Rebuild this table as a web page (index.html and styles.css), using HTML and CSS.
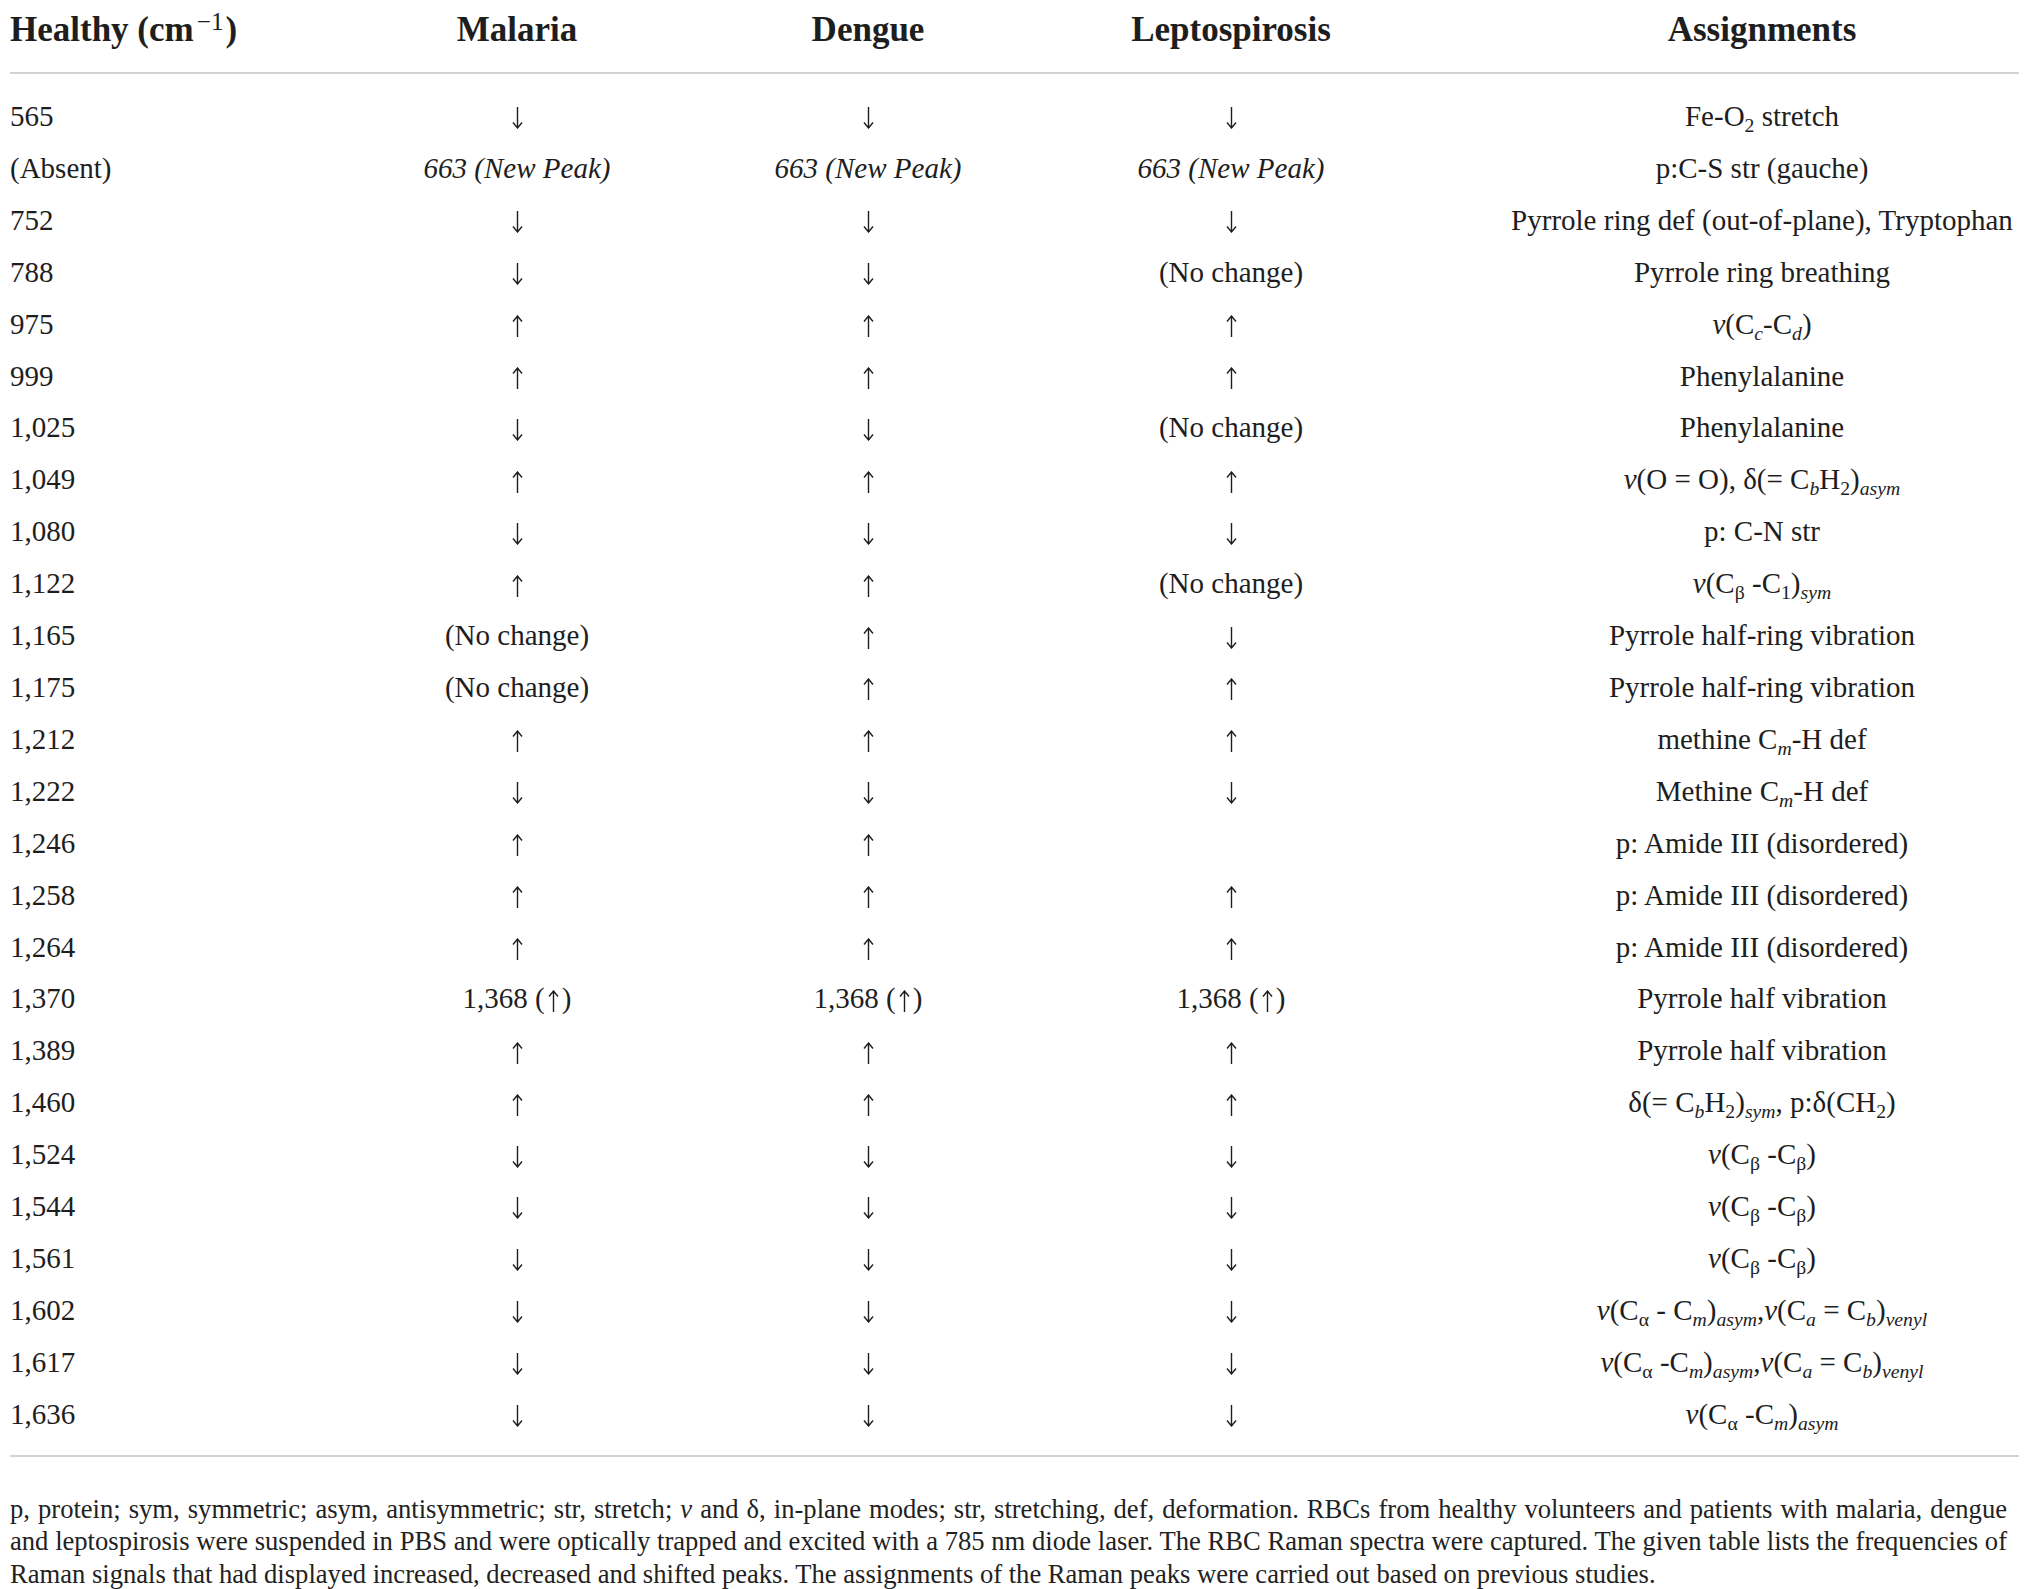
FILE: index.html
```html
<!DOCTYPE html>
<html lang="en">
<head>
<meta charset="utf-8">
<title>Raman peaks of RBCs</title>
<link rel="stylesheet" href="styles.css">
</head>
<body>
<svg class="defs" width="0" height="0" aria-hidden="true">
  <defs>
    <symbol id="up" viewBox="0 0 11 22"><path d="M5.5 22V1M1 6.5L5.5 1L10 6.5"/></symbol>
    <symbol id="down" viewBox="0 0 11 22"><path d="M5.5 0V21M1 15.5L5.5 21L10 15.5"/></symbol>
  </defs>
</svg>
<div class="page">
  <div class="table">
    <div class="row head">
      <div class="cell first"><span>Healthy (cm<sup>−1</sup>)</span></div>
      <div class="cell"><span>Malaria</span></div>
      <div class="cell"><span>Dengue</span></div>
      <div class="cell"><span>Leptospirosis</span></div>
      <div class="cell"><span>Assignments</span></div>
    </div>
    <div class="body">
      <div class="row"><div class="cell first">565</div><div class="cell"><svg class="arrow"><use href="#down"/></svg></div><div class="cell"><svg class="arrow"><use href="#down"/></svg></div><div class="cell"><svg class="arrow"><use href="#down"/></svg></div><div class="cell"><span>Fe-O<sub>2</sub> stretch</span></div></div>
      <div class="row"><div class="cell first">(Absent)</div><div class="cell"><span><i>663 (New Peak)</i></span></div><div class="cell"><span><i>663 (New Peak)</i></span></div><div class="cell"><span><i>663 (New Peak)</i></span></div><div class="cell"><span>p:C-S str (gauche)</span></div></div>
      <div class="row"><div class="cell first">752</div><div class="cell"><svg class="arrow"><use href="#down"/></svg></div><div class="cell"><svg class="arrow"><use href="#down"/></svg></div><div class="cell"><svg class="arrow"><use href="#down"/></svg></div><div class="cell"><span>Pyrrole ring def (out-of-plane), Tryptophan</span></div></div>
      <div class="row"><div class="cell first">788</div><div class="cell"><svg class="arrow"><use href="#down"/></svg></div><div class="cell"><svg class="arrow"><use href="#down"/></svg></div><div class="cell"><span>(No change)</span></div><div class="cell"><span>Pyrrole ring breathing</span></div></div>
      <div class="row"><div class="cell first">975</div><div class="cell"><svg class="arrow"><use href="#up"/></svg></div><div class="cell"><svg class="arrow"><use href="#up"/></svg></div><div class="cell"><svg class="arrow"><use href="#up"/></svg></div><div class="cell"><span><i>ν</i>(C<sub><i>c</i></sub>-C<sub><i>d</i></sub>)</span></div></div>
      <div class="row"><div class="cell first">999</div><div class="cell"><svg class="arrow"><use href="#up"/></svg></div><div class="cell"><svg class="arrow"><use href="#up"/></svg></div><div class="cell"><svg class="arrow"><use href="#up"/></svg></div><div class="cell"><span>Phenylalanine</span></div></div>
      <div class="row"><div class="cell first">1,025</div><div class="cell"><svg class="arrow"><use href="#down"/></svg></div><div class="cell"><svg class="arrow"><use href="#down"/></svg></div><div class="cell"><span>(No change)</span></div><div class="cell"><span>Phenylalanine</span></div></div>
      <div class="row"><div class="cell first">1,049</div><div class="cell"><svg class="arrow"><use href="#up"/></svg></div><div class="cell"><svg class="arrow"><use href="#up"/></svg></div><div class="cell"><svg class="arrow"><use href="#up"/></svg></div><div class="cell"><span><i>ν</i>(O = O), δ(= C<sub><i>b</i></sub>H<sub>2</sub>)<sub><i>asym</i></sub></span></div></div>
      <div class="row"><div class="cell first">1,080</div><div class="cell"><svg class="arrow"><use href="#down"/></svg></div><div class="cell"><svg class="arrow"><use href="#down"/></svg></div><div class="cell"><svg class="arrow"><use href="#down"/></svg></div><div class="cell"><span>p: C-N str</span></div></div>
      <div class="row"><div class="cell first">1,122</div><div class="cell"><svg class="arrow"><use href="#up"/></svg></div><div class="cell"><svg class="arrow"><use href="#up"/></svg></div><div class="cell"><span>(No change)</span></div><div class="cell"><span><i>ν</i>(C<sub>β</sub> -C<sub>1</sub>)<sub><i>sym</i></sub></span></div></div>
      <div class="row"><div class="cell first">1,165</div><div class="cell"><span>(No change)</span></div><div class="cell"><svg class="arrow"><use href="#up"/></svg></div><div class="cell"><svg class="arrow"><use href="#down"/></svg></div><div class="cell"><span>Pyrrole half-ring vibration</span></div></div>
      <div class="row"><div class="cell first">1,175</div><div class="cell"><span>(No change)</span></div><div class="cell"><svg class="arrow"><use href="#up"/></svg></div><div class="cell"><svg class="arrow"><use href="#up"/></svg></div><div class="cell"><span>Pyrrole half-ring vibration</span></div></div>
      <div class="row"><div class="cell first">1,212</div><div class="cell"><svg class="arrow"><use href="#up"/></svg></div><div class="cell"><svg class="arrow"><use href="#up"/></svg></div><div class="cell"><svg class="arrow"><use href="#up"/></svg></div><div class="cell"><span>methine C<sub><i>m</i></sub>-H def</span></div></div>
      <div class="row"><div class="cell first">1,222</div><div class="cell"><svg class="arrow"><use href="#down"/></svg></div><div class="cell"><svg class="arrow"><use href="#down"/></svg></div><div class="cell"><svg class="arrow"><use href="#down"/></svg></div><div class="cell"><span>Methine C<sub><i>m</i></sub>-H def</span></div></div>
      <div class="row"><div class="cell first">1,246</div><div class="cell"><svg class="arrow"><use href="#up"/></svg></div><div class="cell"><svg class="arrow"><use href="#up"/></svg></div><div class="cell"><span></span></div><div class="cell"><span>p: Amide III (disordered)</span></div></div>
      <div class="row"><div class="cell first">1,258</div><div class="cell"><svg class="arrow"><use href="#up"/></svg></div><div class="cell"><svg class="arrow"><use href="#up"/></svg></div><div class="cell"><svg class="arrow"><use href="#up"/></svg></div><div class="cell"><span>p: Amide III (disordered)</span></div></div>
      <div class="row"><div class="cell first">1,264</div><div class="cell"><svg class="arrow"><use href="#up"/></svg></div><div class="cell"><svg class="arrow"><use href="#up"/></svg></div><div class="cell"><svg class="arrow"><use href="#up"/></svg></div><div class="cell"><span>p: Amide III (disordered)</span></div></div>
      <div class="row"><div class="cell first">1,370</div><div class="cell"><span>1,368 (<svg class="arrow in"><use href="#up"/></svg>)</span></div><div class="cell"><span>1,368 (<svg class="arrow in"><use href="#up"/></svg>)</span></div><div class="cell"><span>1,368 (<svg class="arrow in"><use href="#up"/></svg>)</span></div><div class="cell"><span>Pyrrole half vibration</span></div></div>
      <div class="row"><div class="cell first">1,389</div><div class="cell"><svg class="arrow"><use href="#up"/></svg></div><div class="cell"><svg class="arrow"><use href="#up"/></svg></div><div class="cell"><svg class="arrow"><use href="#up"/></svg></div><div class="cell"><span>Pyrrole half vibration</span></div></div>
      <div class="row"><div class="cell first">1,460</div><div class="cell"><svg class="arrow"><use href="#up"/></svg></div><div class="cell"><svg class="arrow"><use href="#up"/></svg></div><div class="cell"><svg class="arrow"><use href="#up"/></svg></div><div class="cell"><span>δ(= C<sub><i>b</i></sub>H<sub>2</sub>)<sub><i>sym</i></sub>, p:δ(CH<sub>2</sub>)</span></div></div>
      <div class="row"><div class="cell first">1,524</div><div class="cell"><svg class="arrow"><use href="#down"/></svg></div><div class="cell"><svg class="arrow"><use href="#down"/></svg></div><div class="cell"><svg class="arrow"><use href="#down"/></svg></div><div class="cell"><span><i>ν</i>(C<sub>β</sub> -C<sub>β</sub>)</span></div></div>
      <div class="row"><div class="cell first">1,544</div><div class="cell"><svg class="arrow"><use href="#down"/></svg></div><div class="cell"><svg class="arrow"><use href="#down"/></svg></div><div class="cell"><svg class="arrow"><use href="#down"/></svg></div><div class="cell"><span><i>ν</i>(C<sub>β</sub> -C<sub>β</sub>)</span></div></div>
      <div class="row"><div class="cell first">1,561</div><div class="cell"><svg class="arrow"><use href="#down"/></svg></div><div class="cell"><svg class="arrow"><use href="#down"/></svg></div><div class="cell"><svg class="arrow"><use href="#down"/></svg></div><div class="cell"><span><i>ν</i>(C<sub>β</sub> -C<sub>β</sub>)</span></div></div>
      <div class="row"><div class="cell first">1,602</div><div class="cell"><svg class="arrow"><use href="#down"/></svg></div><div class="cell"><svg class="arrow"><use href="#down"/></svg></div><div class="cell"><svg class="arrow"><use href="#down"/></svg></div><div class="cell"><span><i>ν</i>(C<sub>α</sub> - C<sub><i>m</i></sub>)<sub><i>asym</i></sub>,<i>ν</i>(C<sub><i>a</i></sub> = C<sub><i>b</i></sub>)<sub><i>venyl</i></sub></span></div></div>
      <div class="row"><div class="cell first">1,617</div><div class="cell"><svg class="arrow"><use href="#down"/></svg></div><div class="cell"><svg class="arrow"><use href="#down"/></svg></div><div class="cell"><svg class="arrow"><use href="#down"/></svg></div><div class="cell"><span><i>ν</i>(C<sub>α</sub> -C<sub><i>m</i></sub>)<sub><i>asym</i></sub>,<i>ν</i>(C<sub><i>a</i></sub> = C<sub><i>b</i></sub>)<sub><i>venyl</i></sub></span></div></div>
      <div class="row"><div class="cell first">1,636</div><div class="cell"><svg class="arrow"><use href="#down"/></svg></div><div class="cell"><svg class="arrow"><use href="#down"/></svg></div><div class="cell"><svg class="arrow"><use href="#down"/></svg></div><div class="cell"><span><i>ν</i>(C<sub>α</sub> -C<sub><i>m</i></sub>)<sub><i>asym</i></sub></span></div></div>
    </div>
  </div>
  <p class="note">p, protein; sym, symmetric; asym, antisymmetric; str, stretch; <i>ν</i> and δ, in-plane modes; str, stretching, def, deformation. RBCs from healthy volunteers and patients with malaria, dengue and leptospirosis were suspended in PBS and were optically trapped and excited with a 785 nm diode laser. The RBC Raman spectra were captured. The given table lists the frequencies of Raman signals that had displayed increased, decreased and shifted peaks. The assignments of the Raman peaks were carried out based on previous studies.</p>
</div>
</body>
</html>
```

FILE: styles.css
```css
html, body {
  margin: 0;
  padding: 0;
  background: #ffffff;
}

.defs {
  position: absolute;
  width: 0;
  height: 0;
  overflow: hidden;
}

.page {
  padding: 0 13px 0 10px;
  font-family: "Liberation Serif", "Times New Roman", serif;
  color: #1e1e1e;
}

.row {
  display: grid;
  grid-template-columns: 246px 522px 180px 546px 516px;
}

.cell {
  display: flex;
  justify-content: center;
  align-items: baseline;
  white-space: nowrap;
  min-width: 0;
}

.cell.first {
  justify-content: flex-start;
}

.head {
  font-weight: bold;
  font-size: 35px;
  line-height: 40px;
  padding: 10px 0 22px;
  border-bottom: 2px solid #d3d3d3;
}

.head sup {
  font-size: 0.72em;
  font-weight: normal;
  line-height: 0;
  vertical-align: 0.42em;
  padding: 0 2px 0 3px;
}

.body {
  padding: 17px 0 14px;
  border-bottom: 2px solid #d3d3d3;
  font-size: 29px;
  line-height: 51.9px;
}

.body sub {
  font-size: 0.68em;
  line-height: 0;
  vertical-align: -0.28em;
}

.arrow {
  width: 11px;
  height: 22px;
  vertical-align: -4px;
  fill: none;
  stroke: #1e1e1e;
  stroke-width: 1.4;
  align-self: center;
  margin-top: 3px;
}

.arrow.in {
  margin: 0 3px;
}

.note {
  margin: 0;
  padding: 36px 12px 0 0;
  font-size: 26.6px;
  line-height: 32.5px;
  text-align: justify;
  color: #222;
}
```
